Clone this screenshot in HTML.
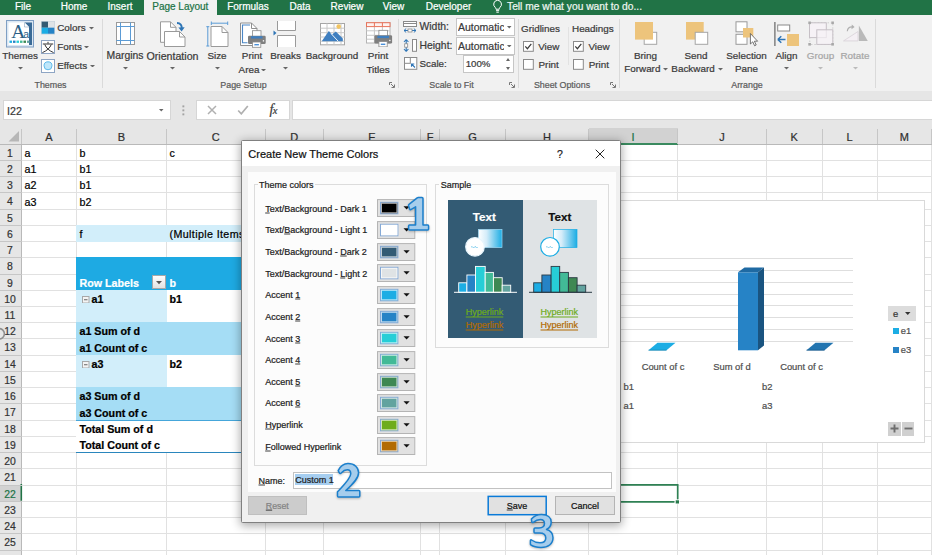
<!DOCTYPE html>
<html><head><meta charset="utf-8"><title>Excel</title>
<style>
html,body{margin:0;padding:0}
body{width:932px;height:555px;overflow:hidden;position:relative;background:#fff;font-family:"Liberation Sans",sans-serif}
.a{position:absolute;box-sizing:border-box}
.t{position:absolute;white-space:nowrap;line-height:1;-webkit-text-stroke:0.22px}
.t.c{transform:translate(-50%,-50%)}
.t.l{transform:translate(0,-50%)}
u{text-decoration:underline;text-underline-offset:0.6px;text-decoration-thickness:0.8px;text-decoration-color:rgba(30,30,30,0.85)}
u.h{text-underline-offset:1.8px;text-decoration-thickness:0.9px;text-decoration-color:currentColor}
</style></head><body>
<div class="a" style="left:0px;top:0px;width:932px;height:15.7px;background:#217346;"></div>
<div class="a" style="left:143.75px;top:0px;width:73.5px;height:17px;background:#f1f1f1;"></div>
<span class="t c" style="left:23px;top:6.5px;font-size:10px;color:#fff;">File</span>
<span class="t c" style="left:74px;top:6.5px;font-size:10px;color:#fff;">Home</span>
<span class="t c" style="left:120px;top:6.5px;font-size:10px;color:#fff;">Insert</span>
<span class="t c" style="left:248px;top:6.5px;font-size:10px;color:#fff;">Formulas</span>
<span class="t c" style="left:300px;top:6.5px;font-size:10px;color:#fff;">Data</span>
<span class="t c" style="left:347px;top:6.5px;font-size:10px;color:#fff;">Review</span>
<span class="t c" style="left:393.5px;top:6.5px;font-size:10px;color:#fff;">View</span>
<span class="t c" style="left:448.5px;top:6.5px;font-size:10px;color:#fff;">Developer</span>
<span class="t c" style="left:180.3px;top:6.5px;font-size:10px;color:#217346;">Page Layout</span>
<span class="t l" style="left:507px;top:6.5px;font-size:10.25px;color:#eef6f1;">Tell me what you want to do...</span>
<svg class="a" style="left:491.2px;top:-0.8px;" width="13.2" height="15.4" viewBox="0 0 12 14"><path d="M6 1.2a3.6 3.6 0 0 0-2.2 6.4c.5.5.7 1 .7 1.7h3c0-.7.2-1.200.7-1.7A3.600 3.600 0 0 0 6 1.200z" fill="none" stroke="#fff" stroke-width="0.9"/><path d="M4.600 10.600h2.800M4.900 12h2.200" stroke="#fff" stroke-width="0.9"/></svg>
<div class="a" style="left:0px;top:15px;width:932px;height:77px;background:#f1f1f1;"></div>
<div class="a" style="left:0px;top:91px;width:932px;height:38px;background:#e6e6e6;"></div>
<div class="a" style="left:102px;top:19px;width:1px;height:69px;background:#dadada;"></div>
<div class="a" style="left:398px;top:19px;width:1px;height:69px;background:#dadada;"></div>
<div class="a" style="left:518px;top:19px;width:1px;height:69px;background:#dadada;"></div>
<div class="a" style="left:618.7px;top:19px;width:1px;height:69px;background:#dadada;"></div>
<div class="a" style="left:875px;top:19px;width:1px;height:69px;background:#dadada;"></div>
<div class="a" style="left:568.3px;top:27px;width:1px;height:38px;background:#e2e2e2;"></div>
<span class="t c" style="left:50.5px;top:85.3px;font-size:8.9px;color:#5c5c5c;">Themes</span>
<span class="t c" style="left:243.5px;top:85.3px;font-size:8.9px;color:#5c5c5c;">Page Setup</span>
<span class="t c" style="left:451.5px;top:85.3px;font-size:8.9px;color:#5c5c5c;">Scale to Fit</span>
<span class="t c" style="left:562px;top:85.3px;font-size:8.9px;color:#5c5c5c;">Sheet Options</span>
<span class="t c" style="left:747px;top:85.3px;font-size:8.9px;color:#5c5c5c;">Arrange</span>
<svg class="a" style="left:388.8px;top:82.3px;" width="6" height="6" viewBox="0 0 6 6"><path d="M0.500 3V0.500H3" fill="none" stroke="#777" stroke-width="1"/><path d="M2 2L5 5M5.500 2.500V5.500H2.500" fill="none" stroke="#777" stroke-width="1"/></svg>
<svg class="a" style="left:508.5px;top:82.3px;" width="6" height="6" viewBox="0 0 6 6"><path d="M0.500 3V0.500H3" fill="none" stroke="#777" stroke-width="1"/><path d="M2 2L5 5M5.500 2.500V5.500H2.500" fill="none" stroke="#777" stroke-width="1"/></svg>
<svg class="a" style="left:610px;top:82.3px;" width="6" height="6" viewBox="0 0 6 6"><path d="M0.500 3V0.500H3" fill="none" stroke="#777" stroke-width="1"/><path d="M2 2L5 5M5.500 2.500V5.500H2.500" fill="none" stroke="#777" stroke-width="1"/></svg>
<svg class="a" style="left:6px;top:20px;" width="28" height="27.5" viewBox="0 0 28 27.5">
<rect x="0.5" y="0.500" width="27" height="26.500" fill="#dbe7f3" stroke="#7f9fc4"/>
<path d="M2.5 2.500H18.500L23 7V25H2.500Z" fill="#fff"/>
<path d="M18.500 2.500H26V25H23V7Z" fill="#3a6a96"/>
<path d="M18.500 2.500V7H23" fill="#fff" stroke="#8aa4c0" stroke-width="0.600"/>
<text x="5.200" y="18.400" font-family="Liberation Serif" font-size="19.500" fill="#2b5f86">A</text>
<text x="17.300" y="18.400" font-family="Liberation Sans" font-size="10.500" fill="#2b5f86">a</text>
<rect x="3.500" y="20.600" width="2.500" height="2.300" fill="#1cade4"/><rect x="7" y="20.600" width="2.500" height="2.300" fill="#2683c6"/><rect x="10.500" y="20.600" width="2.500" height="2.300" fill="#27ced7"/><rect x="14" y="20.600" width="2.500" height="2.300" fill="#42ba97"/><rect x="17.500" y="20.600" width="2.500" height="2.300" fill="#3e8853"/><rect x="21" y="20.600" width="2.500" height="2.300" fill="#62a39f"/>
</svg>
<span class="t c" style="left:20px;top:56px;font-size:9.9px;color:#3a3a3a;">Themes</span>
<svg class="a" style="left:17.5px;top:67.05px;" width="5" height="2.5" viewBox="0 0 5 2.5"><path d="M0 0H5L2.5 2.5Z" fill="#666"/></svg>
<svg class="a" style="left:41px;top:21px;" width="14" height="13.5" viewBox="0 0 14 13.5"><rect x="0" y="0" width="14" height="13.500" fill="#c9d3dc"/><rect x="0.700" y="0.700" width="6.300" height="6" fill="#335a72"/><rect x="7" y="0.700" width="6.300" height="6" fill="#dfe3e6"/><rect x="0.700" y="6.700" width="6.300" height="6" fill="#1cade4"/><rect x="7" y="6.700" width="6.300" height="6" fill="#2683c6"/></svg>
<span class="t l" style="left:57.2px;top:28px;font-size:9.9px;color:#3a3a3a;">Colors</span>
<svg class="a" style="left:88.5px;top:27.05px;" width="5" height="2.5" viewBox="0 0 5 2.5"><path d="M0 0H5L2.5 2.5Z" fill="#666"/></svg>
<svg class="a" style="left:41px;top:39.5px;" width="14" height="14" viewBox="0 0 14 14"><rect x="0.5" y="0.500" width="13" height="13" fill="#fff" stroke="#8ea5c4"/><path d="M7 1.800V3.600M1.800 4H12.200M3.800 4.500C5 8 8.500 11 12.600 12.600M10.300 4.500C9 8 5.500 11 1.400 12.600" fill="none" stroke="#333" stroke-width="1"/></svg>
<span class="t l" style="left:57.2px;top:46.8px;font-size:9.9px;color:#3a3a3a;">Fonts</span>
<svg class="a" style="left:83.5px;top:45.75px;" width="5" height="2.5" viewBox="0 0 5 2.5"><path d="M0 0H5L2.5 2.5Z" fill="#666"/></svg>
<svg class="a" style="left:41px;top:58.5px;" width="14" height="14" viewBox="0 0 14 14"><rect x="0.5" y="0.500" width="13" height="13" fill="#fff" stroke="#8ea5c4"/><circle cx="7" cy="6.800" r="4" fill="#bfe6fa" stroke="#4fb3e8" stroke-width="0.9"/></svg>
<span class="t l" style="left:57.2px;top:65.8px;font-size:9.9px;color:#3a3a3a;">Effects</span>
<svg class="a" style="left:90.0px;top:64.75px;" width="5" height="2.5" viewBox="0 0 5 2.5"><path d="M0 0H5L2.5 2.5Z" fill="#666"/></svg>
<svg class="a" style="left:116px;top:22px;" width="19" height="23" viewBox="0 0 19 23"><rect x="0.5" y="0.500" width="18" height="22" fill="#fff" stroke="#9a9a9a"/><path d="M4.500 0.500V22.500M14.500 0.500V22.500M0.500 4.500H18.500M0.500 18.500H18.500" stroke="#5b9bd5" stroke-width="1" fill="none"/></svg>
<span class="t c" style="left:125px;top:56px;font-size:10.4px;color:#3a3a3a;">Margins</span>
<svg class="a" style="left:122.5px;top:67.05px;" width="5" height="2.5" viewBox="0 0 5 2.5"><path d="M0 0H5L2.5 2.5Z" fill="#666"/></svg>
<svg class="a" style="left:160px;top:20.5px;" width="26" height="26" viewBox="0 0 26 26">
<path d="M0.500 0.800H10.500L16 6.300V21.300H0.500Z" fill="#fff" stroke="#9a9a9a"/><path d="M10.500 0.800V6.300H16" fill="none" stroke="#9a9a9a"/>
<path d="M4.500 10.500H19.500L25 16V25.500H4.500Z" fill="#fff" stroke="#9a9a9a"/><path d="M19.500 10.500V16H25" fill="none" stroke="#9a9a9a"/>
<path d="M17 2C20.500 2 22 4.500 21.700 7.500" fill="none" stroke="#2e75b6" stroke-width="1.900"/><path d="M18.400 6.600L21.600 10.500L24.700 6.300Z" fill="#2e75b6"/>
</svg>
<span class="t c" style="left:172.5px;top:56px;font-size:10.65px;color:#3a3a3a;">Orientation</span>
<svg class="a" style="left:170.0px;top:67.05px;" width="5" height="2.5" viewBox="0 0 5 2.5"><path d="M0 0H5L2.5 2.5Z" fill="#666"/></svg>
<svg class="a" style="left:206px;top:20.5px;" width="23" height="26" viewBox="0 0 23 26">
<path d="M5.300 0.500V4M5.300 2.200H21.700M21.700 0.500V4" stroke="#5b9bd5" fill="none" stroke-width="1"/>
<path d="M1.800 5.500V25.100M0.300 5.700H3.300M0.300 25H3.300" stroke="#5b9bd5" fill="none" stroke-width="1"/>
<path d="M5 5.500H16L22 11.500V25.500H5Z" fill="#fff" stroke="#9a9a9a"/><path d="M16 5.500V11.500H22" fill="none" stroke="#9a9a9a"/>
</svg>
<span class="t c" style="left:217px;top:56px;font-size:9.9px;color:#3a3a3a;">Size</span>
<svg class="a" style="left:214.5px;top:67.05px;" width="5" height="2.5" viewBox="0 0 5 2.5"><path d="M0 0H5L2.5 2.5Z" fill="#666"/></svg>
<svg class="a" style="left:240px;top:20.5px;" width="27" height="27" viewBox="0 0 27 27">
<path d="M0.500 2H11.500L17 7.500V24.500H0.500Z" fill="#fff" stroke="#8f8f8f"/><path d="M11.500 2V7.500H17" fill="none" stroke="#8f8f8f"/>
<path d="M10 4H2.500V21.800H7.500" fill="none" stroke="#4a86c5" stroke-width="1.100"/>
<rect x="12.5" y="9.7" width="8.500" height="6" fill="#fff" stroke="#8a8a8a" stroke-width="0.800"/><rect x="8.0" y="14.7" width="17.700" height="8.200" rx="1.200" fill="#7f7f7f"/><rect x="11.0" y="15.2" width="11.500" height="2.300" fill="#3f7fc0"/><rect x="22.8" y="19.2" width="1.300" height="1.300" fill="#fff"/><rect x="12.5" y="21.0" width="8.300" height="5.300" fill="#fff" stroke="#8a8a8a" stroke-width="0.800"/><path d="M14.4 23.7h4.500" stroke="#4a90d9" stroke-width="1.400"/></svg>
<span class="t c" style="left:252px;top:56px;font-size:9.9px;color:#3a3a3a;">Print</span>
<span class="t c" style="left:249px;top:69.8px;font-size:9.9px;color:#3a3a3a;">Area</span>
<svg class="a" style="left:260.8px;top:68.55px;" width="5" height="2.5" viewBox="0 0 5 2.5"><path d="M0 0H5L2.5 2.5Z" fill="#666"/></svg>
<svg class="a" style="left:272px;top:20.5px;" width="25" height="26" viewBox="0 0 25 26">
<path d="M5.500 0V9.500H23.500V0" fill="#fff" stroke="#9a9a9a"/>
<path d="M5.500 26V14.500H23.500V26" fill="#fff" stroke="#9a9a9a"/>
<path d="M1.500 9.500L4.500 12L1.500 14.500Z" fill="#2e75b6"/>
</svg>
<span class="t c" style="left:285.5px;top:56px;font-size:9.9px;color:#3a3a3a;">Breaks</span>
<svg class="a" style="left:283.0px;top:67.05px;" width="5" height="2.5" viewBox="0 0 5 2.5"><path d="M0 0H5L2.5 2.5Z" fill="#666"/></svg>
<svg class="a" style="left:319.5px;top:22.5px;" width="25" height="23" viewBox="0 0 25 23">
<rect x="0.5" y="0.500" width="24" height="21.300" fill="#fff" stroke="#a6a6a6"/>
<path d="M7 0.500V21.500M14 0.500V21.500M21 0.500V21.500M0.500 5.200H24.500M0.500 9.700H24.500M0.500 14H24.500M0.500 18.200H24.500" stroke="#c8c8c8" stroke-width="1" fill="none"/>
<circle cx="18.700" cy="3.600" r="2.300" fill="#f2c562"/>
<path d="M1.800 18.200L8.800 8L18.300 18.200Z" fill="#3f7fc0"/><path d="M11.800 11.800L15.800 8.600L22.800 15.500V18.200H17.800Z" fill="#3f7fc0"/>
<path d="M11 10.500L18.300 18.400" stroke="#fff" stroke-width="0.900"/>
</svg>
<span class="t c" style="left:332px;top:56px;font-size:9.9px;color:#3a3a3a;">Background</span>
<svg class="a" style="left:366px;top:22px;" width="27" height="25" viewBox="0 0 27 25">
<rect x="0.5" y="0.700" width="23.500" height="20.300" fill="#fff" stroke="#b4b4b4"/>
<path d="M8.400 4.600V21M16.400 4.600V21M0.500 8.800H24M0.500 13.300H24M0.500 17.200H24" stroke="#c8c8c8" stroke-width="1" fill="none"/>
<rect x="0.500" y="0.700" width="23.500" height="3.900" fill="#fdf1ee" stroke="#e8735a" stroke-width="1"/><path d="M8.400 0.700V4.600M16.400 0.700V4.600" stroke="#e8735a" stroke-width="1"/>
<rect x="12.9" y="8.3" width="8.500" height="6" fill="#fff" stroke="#8a8a8a" stroke-width="0.800"/><rect x="8.4" y="13.3" width="17.700" height="8.200" rx="1.200" fill="#7f7f7f"/><rect x="11.4" y="13.8" width="11.500" height="2.300" fill="#3f7fc0"/><rect x="23.2" y="17.8" width="1.300" height="1.300" fill="#fff"/><rect x="12.9" y="19.6" width="8.300" height="5.300" fill="#fff" stroke="#8a8a8a" stroke-width="0.800"/><path d="M14.8 22.3h4.500" stroke="#4a90d9" stroke-width="1.400"/></svg>
<span class="t c" style="left:378px;top:56px;font-size:9.9px;color:#3a3a3a;">Print</span>
<span class="t c" style="left:378px;top:69.8px;font-size:9.9px;color:#3a3a3a;">Titles</span>
<svg class="a" style="left:403px;top:21px;" width="14" height="12" viewBox="0 0 14 12"><rect x="0.5" y="0.500" width="13" height="5" fill="#fff" stroke="#8a8a8a"/><path d="M0.500 2.500H13.500" stroke="#8a8a8a"/><path d="M1 9.500H13M1 9.500L3.200 7.500M1 9.500L3.200 11.500M13 9.500L10.800 7.500M13 9.500L10.800 11.500" stroke="#2e75b6" stroke-width="1" fill="none"/><rect x="5" y="8" width="4" height="3" fill="#fff" stroke="#8a8a8a" stroke-width="0.800"/></svg>
<span class="t l" style="left:419.5px;top:27.3px;font-size:10.4px;color:#3a3a3a;">Width:</span>
<div class="a" style="left:456px;top:18px;width:58.5px;height:18px;background:#fff;border:1px solid #c6c6c6;"></div>
<span class="t l" style="left:458px;top:27.300px;font-size:10.500px;color:#3a3a3a;width:45.600px;overflow:hidden;">Automatic</span>
<svg class="a" style="left:507.25px;top:26.25px;" width="4.5" height="2.5" viewBox="0 0 4.5 2.5"><path d="M0 0H4.5L2.25 2.5Z" fill="#666"/></svg>
<svg class="a" style="left:403px;top:38.5px;" width="14" height="13" viewBox="0 0 14 13"><path d="M3.200 0.500V12.500M3.200 0.500L1 3M3.200 0.500L5.400 3M3.200 12.500L1 10M3.200 12.500L5.400 10" stroke="#2e75b6" stroke-width="1.100" fill="none"/><rect x="1.700" y="4.800" width="3" height="3.400" fill="#fff" stroke="#8a8a8a" stroke-width="0.800"/><rect x="9.500" y="0.500" width="4" height="11.800" fill="#fff" stroke="#8a8a8a"/></svg>
<span class="t l" style="left:419.5px;top:45.8px;font-size:10.4px;color:#3a3a3a;">Height:</span>
<div class="a" style="left:456px;top:36.5px;width:58.5px;height:18px;background:#fff;border:1px solid #c6c6c6;"></div>
<span class="t l" style="left:458px;top:45.800px;font-size:10.500px;color:#3a3a3a;width:45.600px;overflow:hidden;">Automatic</span>
<svg class="a" style="left:507.25px;top:44.75px;" width="4.5" height="2.5" viewBox="0 0 4.5 2.5"><path d="M0 0H4.5L2.25 2.5Z" fill="#666"/></svg>
<svg class="a" style="left:403.7px;top:56.7px;" width="14" height="13" viewBox="0 0 14 13"><rect x="0.5" y="0.500" width="12.300" height="11.800" fill="#fff" stroke="#8a8a8a"/><rect x="0.500" y="0.500" width="5.800" height="5.800" fill="#fff" stroke="#8a8a8a"/><path d="M11 10.500L7.500 7M7.500 9.800V7H10.300" stroke="#2e75b6" stroke-width="1.100" fill="none"/></svg>
<span class="t l" style="left:419.5px;top:64.3px;font-size:9.8px;color:#3a3a3a;">Scale:</span>
<div class="a" style="left:463.3px;top:55px;width:51.2px;height:17.7px;background:#fff;border:1px solid #c6c6c6;"></div>
<span class="t l" style="left:465.7px;top:64.3px;font-size:9.7px;color:#3a3a3a;">100%</span>
<svg class="a" style="left:506px;top:58px;" width="4" height="3" viewBox="0 0 4 3"><path d="M0 3L2 0L4 3Z" fill="#666"/></svg>
<svg class="a" style="left:506px;top:66.5px;" width="4" height="3" viewBox="0 0 4 3"><path d="M0 0L2 3L4 0Z" fill="#666"/></svg>
<span class="t l" style="left:521px;top:29px;font-size:9.9px;color:#3a3a3a;">Gridlines</span>
<span class="t l" style="left:572px;top:29px;font-size:9.9px;color:#3a3a3a;">Headings</span>
<svg class="a" style="left:523.2px;top:41.3px;" width="10.8" height="10.8" viewBox="0 0 10.8 10.8"><rect x="0.5" y="0.500" width="9.800" height="9.800" fill="#fff" stroke="#8a8a8a"/><path d="M2.300 5.300L4.400 7.700L8.300 2.800" fill="none" stroke="#3a3a3a" stroke-width="1.200"/></svg>
<svg class="a" style="left:523.2px;top:59.4px;" width="10.8" height="10.8" viewBox="0 0 10.8 10.8"><rect x="0.5" y="0.500" width="9.800" height="9.800" fill="#fff" stroke="#8a8a8a"/></svg>
<svg class="a" style="left:573.2px;top:41.3px;" width="10.8" height="10.8" viewBox="0 0 10.8 10.8"><rect x="0.5" y="0.500" width="9.800" height="9.800" fill="#fff" stroke="#8a8a8a"/><path d="M2.300 5.300L4.400 7.700L8.300 2.800" fill="none" stroke="#3a3a3a" stroke-width="1.200"/></svg>
<svg class="a" style="left:573.2px;top:59.4px;" width="10.8" height="10.8" viewBox="0 0 10.8 10.8"><rect x="0.5" y="0.500" width="9.800" height="9.800" fill="#fff" stroke="#8a8a8a"/></svg>
<span class="t l" style="left:538.2px;top:47.2px;font-size:9.9px;color:#3a3a3a;">View</span>
<span class="t l" style="left:538.5px;top:65.4px;font-size:9.9px;color:#3a3a3a;">Print</span>
<span class="t l" style="left:588.4px;top:47.2px;font-size:9.9px;color:#3a3a3a;">View</span>
<span class="t l" style="left:588.7px;top:65.4px;font-size:9.9px;color:#3a3a3a;">Print</span>
<svg class="a" style="left:634.7px;top:22.2px;" width="24" height="23" viewBox="0 0 24 23"><rect x="9.200" y="10.300" width="12.500" height="12" fill="#fff" stroke="#a6a6a6"/><rect x="0" y="0" width="18" height="17.600" fill="#edc47c"/></svg>
<span class="t c" style="left:645.5px;top:56px;font-size:9.9px;color:#3a3a3a;">Bring</span>
<span class="t c" style="left:642.3px;top:69.3px;font-size:9.9px;color:#3a3a3a;">Forward</span>
<svg class="a" style="left:663.0px;top:68.35px;" width="5" height="2.5" viewBox="0 0 5 2.5"><path d="M0 0H5L2.5 2.5Z" fill="#666"/></svg>
<svg class="a" style="left:685.5px;top:22.2px;" width="24" height="23" viewBox="0 0 24 23"><rect x="0" y="0" width="17.700" height="17.600" fill="#edc47c"/><rect x="9.200" y="10.300" width="12.500" height="12" fill="#fff" stroke="#a6a6a6"/></svg>
<span class="t c" style="left:696px;top:56px;font-size:9.9px;color:#3a3a3a;">Send</span>
<span class="t c" style="left:693px;top:69.3px;font-size:9.9px;color:#3a3a3a;">Backward</span>
<svg class="a" style="left:717.5px;top:68.35px;" width="5" height="2.5" viewBox="0 0 5 2.5"><path d="M0 0H5L2.5 2.5Z" fill="#666"/></svg>
<svg class="a" style="left:735px;top:21px;" width="24" height="26" viewBox="0 0 24 26"><rect x="1" y="0.800" width="11" height="10" fill="#fff" stroke="#9a9a9a"/><rect x="1" y="13.300" width="11" height="10" fill="#fff" stroke="#9a9a9a"/><rect x="8" y="7" width="10.300" height="9.500" fill="#edc47c"/>
<path d="M15.400 12.500V23L17.800 20.800L19.600 24.800L21.200 24L19.400 20.200H22.600Z" fill="#fff" stroke="#555" stroke-width="0.800"/></svg>
<span class="t c" style="left:746.5px;top:56px;font-size:9.9px;color:#3a3a3a;">Selection</span>
<span class="t c" style="left:746.5px;top:69.3px;font-size:9.9px;color:#3a3a3a;">Pane</span>
<svg class="a" style="left:773px;top:21.5px;" width="27" height="25" viewBox="0 0 27 25"><path d="M1.900 0V24" stroke="#666" stroke-width="1.200"/><rect x="4.700" y="3" width="12" height="6" fill="#fff" stroke="#8a8a8a"/><rect x="14" y="12" width="12" height="12" fill="#edc47c"/>
<path d="M4.800 17.500H12.500M4.800 17.500L8.300 14.200M4.800 17.500L8.300 20.800" stroke="#2e75b6" stroke-width="1.500" fill="none"/></svg>
<span class="t c" style="left:786.5px;top:56px;font-size:9.9px;color:#3a3a3a;">Align</span>
<svg class="a" style="left:784.0px;top:67.05px;" width="5" height="2.5" viewBox="0 0 5 2.5"><path d="M0 0H5L2.5 2.5Z" fill="#666"/></svg>
<svg class="a" style="left:808px;top:21px;" width="26" height="25" viewBox="0 0 26 25"><path d="M3 1.800H23M3 23.500H23M1.800 3V22M24.800 3V22" fill="none" stroke="#cfcfcf" stroke-dasharray="1.500 1.800"/>
<rect x="1.500" y="1.800" width="16.800" height="14.800" fill="#f6f2f6" stroke="#c6c0c6"/><rect x="8.800" y="8.800" width="16" height="14.600" fill="#f6f2f6" fill-opacity="0.700" stroke="#c6c0c6"/>
<rect x="0.300" y="0.500" width="2.600" height="2.600" fill="#a8a8a8"/><rect x="23.300" y="0.500" width="2.600" height="2.600" fill="#a8a8a8"/><rect x="0.300" y="22" width="2.600" height="2.600" fill="#a8a8a8"/><rect x="23.300" y="22" width="2.600" height="2.600" fill="#a8a8a8"/></svg>
<span class="t c" style="left:820.5px;top:56px;font-size:9.9px;color:#a6a6a6;">Group</span>
<svg class="a" style="left:818.0px;top:67.05px;" width="5" height="2.5" viewBox="0 0 5 2.5"><path d="M0 0H5L2.5 2.5Z" fill="#bbb"/></svg>
<svg class="a" style="left:843px;top:22px;" width="26" height="22" viewBox="0 0 26 22"><path d="M0.500 18.900H15V9.500Z" fill="#f4f0f4" stroke="#d8d2d8" stroke-width="0.800"/><path d="M15.900 18.900V3.400L24.800 18.900Z" fill="#b9b9b9"/>
<path d="M4.300 9.300C4.500 6.500 6.500 4.800 9.500 4.900" fill="none" stroke="#b0b0b0" stroke-width="1.200"/><path d="M8.800 2.500L11.600 5L8.500 7.200Z" fill="#b0b0b0"/></svg>
<span class="t c" style="left:855px;top:56px;font-size:9.9px;color:#a6a6a6;">Rotate</span>
<svg class="a" style="left:852.5px;top:67.05px;" width="5" height="2.5" viewBox="0 0 5 2.5"><path d="M0 0H5L2.5 2.5Z" fill="#bbb"/></svg>
<div class="a" style="left:3px;top:100px;width:167.5px;height:20px;background:#fff;border:1px solid #d6d6d6;"></div>
<span class="t l" style="left:7px;top:110.5px;font-size:10.7px;color:#3a3a3a;">I22</span>
<svg class="a" style="left:159.25px;top:109.25px;" width="4.5" height="2.5" viewBox="0 0 4.5 2.5"><path d="M0 0H4.5L2.25 2.5Z" fill="#666"/></svg>
<svg class="a" style="left:182.3px;top:105.1px;" width="3" height="3" viewBox="0 0 3 3"><rect x="0.400" y="0.400" width="1.900" height="1.900" fill="#a3a3a3"/></svg>
<svg class="a" style="left:182.3px;top:109.1px;" width="3" height="3" viewBox="0 0 3 3"><rect x="0.400" y="0.400" width="1.900" height="1.900" fill="#a3a3a3"/></svg>
<svg class="a" style="left:182.3px;top:113.1px;" width="3" height="3" viewBox="0 0 3 3"><rect x="0.400" y="0.400" width="1.900" height="1.900" fill="#a3a3a3"/></svg>
<div class="a" style="left:196px;top:100px;width:94px;height:20px;background:#fff;border:1px solid #d6d6d6;"></div>
<svg class="a" style="left:206.5px;top:105.3px;" width="10" height="10" viewBox="0 0 10 10"><path d="M1 1L9 9M9 1L1 9" stroke="#b0b0b0" stroke-width="1.500" fill="none"/></svg>
<svg class="a" style="left:237px;top:105.3px;" width="12" height="10" viewBox="0 0 12 10"><path d="M1.200 5.500L4.300 8.800L10.800 1" stroke="#b0b0b0" stroke-width="1.700" fill="none"/></svg>
<span class="t c" style="left:273.500px;top:110.300px;font-size:14px;color:#3c3c3c;font-family:'Liberation Serif',serif;font-style:italic;">f<span style="font-size:10.500px;margin-left:-0.500px">x</span></span>
<div class="a" style="left:292px;top:100px;width:645px;height:20px;background:#fff;border:1px solid #d6d6d6;"></div>
<div class="a" style="left:0px;top:128px;width:932px;height:16.5px;background:#e6e6e6;"></div>
<div class="a" style="left:588.5px;top:128px;width:89px;height:16.5px;background:#d2d2d2;"></div>
<div class="a" style="left:588.5px;top:142.9px;width:89.5px;height:2.1px;background:#3a8a5f;"></div>
<div class="a" style="left:0px;top:143.6px;width:588.5px;height:1px;background:#b9b9b9;"></div>
<div class="a" style="left:678px;top:143.6px;width:260px;height:1px;background:#b9b9b9;"></div>
<svg class="a" style="left:8px;top:131px;" width="12" height="11" viewBox="0 0 12 11"><path d="M11 0V10.500H0.500Z" fill="#b7b7b7"/></svg>
<div class="a" style="left:21.0px;top:129px;width:1px;height:15px;background:#c6c6c6;"></div>
<span class="t c" style="left:49.0px;top:136.8px;font-size:11px;color:#303030;">A</span>
<div class="a" style="left:76.0px;top:129px;width:1px;height:15px;background:#c6c6c6;"></div>
<span class="t c" style="left:121.5px;top:136.8px;font-size:11px;color:#303030;">B</span>
<div class="a" style="left:166.0px;top:129px;width:1px;height:15px;background:#c6c6c6;"></div>
<span class="t c" style="left:215.75px;top:136.8px;font-size:11px;color:#303030;">C</span>
<div class="a" style="left:264.5px;top:129px;width:1px;height:15px;background:#c6c6c6;"></div>
<span class="t c" style="left:294.25px;top:136.8px;font-size:11px;color:#303030;">D</span>
<div class="a" style="left:323.0px;top:129px;width:1px;height:15px;background:#c6c6c6;"></div>
<span class="t c" style="left:372.0px;top:136.8px;font-size:11px;color:#303030;">E</span>
<div class="a" style="left:420.0px;top:129px;width:1px;height:15px;background:#c6c6c6;"></div>
<span class="t c" style="left:430.0px;top:136.8px;font-size:11px;color:#303030;">F</span>
<div class="a" style="left:439.0px;top:129px;width:1px;height:15px;background:#c6c6c6;"></div>
<span class="t c" style="left:472.5px;top:136.8px;font-size:11px;color:#303030;">G</span>
<div class="a" style="left:505.0px;top:129px;width:1px;height:15px;background:#c6c6c6;"></div>
<span class="t c" style="left:547.0px;top:136.8px;font-size:11px;color:#303030;">H</span>
<div class="a" style="left:588.0px;top:129px;width:1px;height:15px;background:#c6c6c6;"></div>
<span class="t c" style="left:633.0px;top:136.8px;font-size:11px;color:#217346;">I</span>
<div class="a" style="left:677.0px;top:129px;width:1px;height:15px;background:#c6c6c6;"></div>
<span class="t c" style="left:722.0px;top:136.8px;font-size:11px;color:#303030;">J</span>
<div class="a" style="left:766.0px;top:129px;width:1px;height:15px;background:#c6c6c6;"></div>
<span class="t c" style="left:794.25px;top:136.8px;font-size:11px;color:#303030;">K</span>
<div class="a" style="left:821.5px;top:129px;width:1px;height:15px;background:#c6c6c6;"></div>
<span class="t c" style="left:849.5px;top:136.8px;font-size:11px;color:#303030;">L</span>
<div class="a" style="left:876.5px;top:129px;width:1px;height:15px;background:#c6c6c6;"></div>
<span class="t c" style="left:904.25px;top:136.8px;font-size:11px;color:#303030;">M</span>
<div class="a" style="left:931px;top:129px;width:1px;height:15px;background:#c6c6c6;"></div>
<div class="a" style="left:931px;top:145px;width:1px;height:410px;background:#e1e1e1;"></div>
<div class="a" style="left:21.0px;top:145px;width:1px;height:410px;background:#e1e1e1;"></div>
<div class="a" style="left:76.0px;top:145px;width:1px;height:410px;background:#e1e1e1;"></div>
<div class="a" style="left:166.0px;top:145px;width:1px;height:410px;background:#e1e1e1;"></div>
<div class="a" style="left:264.5px;top:145px;width:1px;height:410px;background:#e1e1e1;"></div>
<div class="a" style="left:323.0px;top:145px;width:1px;height:410px;background:#e1e1e1;"></div>
<div class="a" style="left:420.0px;top:145px;width:1px;height:410px;background:#e1e1e1;"></div>
<div class="a" style="left:439.0px;top:145px;width:1px;height:410px;background:#e1e1e1;"></div>
<div class="a" style="left:505.0px;top:145px;width:1px;height:410px;background:#e1e1e1;"></div>
<div class="a" style="left:588.0px;top:145px;width:1px;height:410px;background:#e1e1e1;"></div>
<div class="a" style="left:677.0px;top:145px;width:1px;height:410px;background:#e1e1e1;"></div>
<div class="a" style="left:766.0px;top:145px;width:1px;height:410px;background:#e1e1e1;"></div>
<div class="a" style="left:821.5px;top:145px;width:1px;height:410px;background:#e1e1e1;"></div>
<div class="a" style="left:876.5px;top:145px;width:1px;height:410px;background:#e1e1e1;"></div>
<div class="a" style="left:0px;top:145px;width:21.5px;height:410px;background:#e6e6e6;"></div>
<div class="a" style="left:21px;top:145px;width:1px;height:410px;background:#b9b9b9;"></div>
<div class="a" style="left:0px;top:485.14px;width:21.5px;height:16.24px;background:#d2d2d2;"></div>
<svg class="a" style="left:19px;top:483.74px;" width="4" height="17.24" viewBox="0 0 4 17.24"><rect x="1.500" y="0" width="1.600" height="16.74" fill="#217346"/></svg>
<div class="a" style="left:21.5px;top:159.84px;width:911px;height:1px;background:#e1e1e1;"></div>
<div class="a" style="left:0px;top:159.84px;width:21.5px;height:1px;background:#c6c6c6;"></div>
<span class="t c" style="left:10px;top:153.6px;font-size:11.3px;color:#333;transform:translate(-50%,-50%) scaleX(0.920);">1</span>
<div class="a" style="left:21.5px;top:176.08px;width:911px;height:1px;background:#e1e1e1;"></div>
<div class="a" style="left:0px;top:176.08px;width:21.5px;height:1px;background:#c6c6c6;"></div>
<span class="t c" style="left:10px;top:169.84px;font-size:11.3px;color:#333;transform:translate(-50%,-50%) scaleX(0.920);">2</span>
<div class="a" style="left:21.5px;top:192.32px;width:911px;height:1px;background:#e1e1e1;"></div>
<div class="a" style="left:0px;top:192.32px;width:21.5px;height:1px;background:#c6c6c6;"></div>
<span class="t c" style="left:10px;top:186.07999999999998px;font-size:11.3px;color:#333;transform:translate(-50%,-50%) scaleX(0.920);">3</span>
<div class="a" style="left:21.5px;top:208.56px;width:911px;height:1px;background:#e1e1e1;"></div>
<div class="a" style="left:0px;top:208.56px;width:21.5px;height:1px;background:#c6c6c6;"></div>
<span class="t c" style="left:10px;top:202.32px;font-size:11.3px;color:#333;transform:translate(-50%,-50%) scaleX(0.920);">4</span>
<div class="a" style="left:21.5px;top:224.8px;width:911px;height:1px;background:#e1e1e1;"></div>
<div class="a" style="left:0px;top:224.8px;width:21.5px;height:1px;background:#c6c6c6;"></div>
<span class="t c" style="left:10px;top:218.56px;font-size:11.3px;color:#333;transform:translate(-50%,-50%) scaleX(0.920);">5</span>
<div class="a" style="left:21.5px;top:241.04px;width:911px;height:1px;background:#e1e1e1;"></div>
<div class="a" style="left:0px;top:241.04px;width:21.5px;height:1px;background:#c6c6c6;"></div>
<span class="t c" style="left:10px;top:234.79999999999998px;font-size:11.3px;color:#333;transform:translate(-50%,-50%) scaleX(0.920);">6</span>
<div class="a" style="left:21.5px;top:257.28px;width:911px;height:1px;background:#e1e1e1;"></div>
<div class="a" style="left:0px;top:257.28px;width:21.5px;height:1px;background:#c6c6c6;"></div>
<span class="t c" style="left:10px;top:251.04px;font-size:11.3px;color:#333;transform:translate(-50%,-50%) scaleX(0.920);">7</span>
<div class="a" style="left:21.5px;top:273.52px;width:911px;height:1px;background:#e1e1e1;"></div>
<div class="a" style="left:0px;top:273.52px;width:21.5px;height:1px;background:#c6c6c6;"></div>
<span class="t c" style="left:10px;top:267.28px;font-size:11.3px;color:#333;transform:translate(-50%,-50%) scaleX(0.920);">8</span>
<div class="a" style="left:21.5px;top:289.76px;width:911px;height:1px;background:#e1e1e1;"></div>
<div class="a" style="left:0px;top:289.76px;width:21.5px;height:1px;background:#c6c6c6;"></div>
<span class="t c" style="left:10px;top:283.52px;font-size:11.3px;color:#333;transform:translate(-50%,-50%) scaleX(0.920);">9</span>
<div class="a" style="left:21.5px;top:306.0px;width:911px;height:1px;background:#e1e1e1;"></div>
<div class="a" style="left:0px;top:306.0px;width:21.5px;height:1px;background:#c6c6c6;"></div>
<span class="t c" style="left:10px;top:299.76px;font-size:11.3px;color:#333;transform:translate(-50%,-50%) scaleX(0.920);">10</span>
<div class="a" style="left:21.5px;top:322.24px;width:911px;height:1px;background:#e1e1e1;"></div>
<div class="a" style="left:0px;top:322.24px;width:21.5px;height:1px;background:#c6c6c6;"></div>
<span class="t c" style="left:10px;top:316.0px;font-size:11.3px;color:#333;transform:translate(-50%,-50%) scaleX(0.920);">11</span>
<div class="a" style="left:21.5px;top:338.48px;width:911px;height:1px;background:#e1e1e1;"></div>
<div class="a" style="left:0px;top:338.48px;width:21.5px;height:1px;background:#c6c6c6;"></div>
<span class="t c" style="left:10px;top:332.24px;font-size:11.3px;color:#333;transform:translate(-50%,-50%) scaleX(0.920);">12</span>
<div class="a" style="left:21.5px;top:354.72px;width:911px;height:1px;background:#e1e1e1;"></div>
<div class="a" style="left:0px;top:354.72px;width:21.5px;height:1px;background:#c6c6c6;"></div>
<span class="t c" style="left:10px;top:348.48px;font-size:11.3px;color:#333;transform:translate(-50%,-50%) scaleX(0.920);">13</span>
<div class="a" style="left:21.5px;top:370.96px;width:911px;height:1px;background:#e1e1e1;"></div>
<div class="a" style="left:0px;top:370.96px;width:21.5px;height:1px;background:#c6c6c6;"></div>
<span class="t c" style="left:10px;top:364.71999999999997px;font-size:11.3px;color:#333;transform:translate(-50%,-50%) scaleX(0.920);">14</span>
<div class="a" style="left:21.5px;top:387.2px;width:911px;height:1px;background:#e1e1e1;"></div>
<div class="a" style="left:0px;top:387.2px;width:21.5px;height:1px;background:#c6c6c6;"></div>
<span class="t c" style="left:10px;top:380.96px;font-size:11.3px;color:#333;transform:translate(-50%,-50%) scaleX(0.920);">15</span>
<div class="a" style="left:21.5px;top:403.43999999999994px;width:911px;height:1px;background:#e1e1e1;"></div>
<div class="a" style="left:0px;top:403.43999999999994px;width:21.5px;height:1px;background:#c6c6c6;"></div>
<span class="t c" style="left:10px;top:397.19999999999993px;font-size:11.3px;color:#333;transform:translate(-50%,-50%) scaleX(0.920);">16</span>
<div class="a" style="left:21.5px;top:419.67999999999995px;width:911px;height:1px;background:#e1e1e1;"></div>
<div class="a" style="left:0px;top:419.67999999999995px;width:21.5px;height:1px;background:#c6c6c6;"></div>
<span class="t c" style="left:10px;top:413.43999999999994px;font-size:11.3px;color:#333;transform:translate(-50%,-50%) scaleX(0.920);">17</span>
<div class="a" style="left:21.5px;top:435.91999999999996px;width:911px;height:1px;background:#e1e1e1;"></div>
<div class="a" style="left:0px;top:435.91999999999996px;width:21.5px;height:1px;background:#c6c6c6;"></div>
<span class="t c" style="left:10px;top:429.67999999999995px;font-size:11.3px;color:#333;transform:translate(-50%,-50%) scaleX(0.920);">18</span>
<div class="a" style="left:21.5px;top:452.15999999999997px;width:911px;height:1px;background:#e1e1e1;"></div>
<div class="a" style="left:0px;top:452.15999999999997px;width:21.5px;height:1px;background:#c6c6c6;"></div>
<span class="t c" style="left:10px;top:445.91999999999996px;font-size:11.3px;color:#333;transform:translate(-50%,-50%) scaleX(0.920);">19</span>
<div class="a" style="left:21.5px;top:468.4px;width:911px;height:1px;background:#e1e1e1;"></div>
<div class="a" style="left:0px;top:468.4px;width:21.5px;height:1px;background:#c6c6c6;"></div>
<span class="t c" style="left:10px;top:462.15999999999997px;font-size:11.3px;color:#333;transform:translate(-50%,-50%) scaleX(0.920);">20</span>
<div class="a" style="left:21.5px;top:484.64px;width:911px;height:1px;background:#e1e1e1;"></div>
<div class="a" style="left:0px;top:484.64px;width:21.5px;height:1px;background:#c6c6c6;"></div>
<span class="t c" style="left:10px;top:478.4px;font-size:11.3px;color:#333;transform:translate(-50%,-50%) scaleX(0.920);">21</span>
<div class="a" style="left:21.5px;top:500.88px;width:911px;height:1px;background:#e1e1e1;"></div>
<div class="a" style="left:0px;top:500.88px;width:21.5px;height:1px;background:#c6c6c6;"></div>
<span class="t c" style="left:10px;top:494.64px;font-size:11.3px;color:#217346;transform:translate(-50%,-50%) scaleX(0.920);">22</span>
<div class="a" style="left:21.5px;top:517.12px;width:911px;height:1px;background:#e1e1e1;"></div>
<div class="a" style="left:0px;top:517.12px;width:21.5px;height:1px;background:#c6c6c6;"></div>
<span class="t c" style="left:10px;top:510.88px;font-size:11.3px;color:#333;transform:translate(-50%,-50%) scaleX(0.920);">23</span>
<div class="a" style="left:21.5px;top:533.36px;width:911px;height:1px;background:#e1e1e1;"></div>
<div class="a" style="left:0px;top:533.36px;width:21.5px;height:1px;background:#c6c6c6;"></div>
<span class="t c" style="left:10px;top:527.12px;font-size:11.3px;color:#333;transform:translate(-50%,-50%) scaleX(0.920);">24</span>
<div class="a" style="left:21.5px;top:549.6px;width:911px;height:1px;background:#e1e1e1;"></div>
<div class="a" style="left:0px;top:549.6px;width:21.5px;height:1px;background:#c6c6c6;"></div>
<span class="t c" style="left:10px;top:543.36px;font-size:11.3px;color:#333;transform:translate(-50%,-50%) scaleX(0.920);">25</span>
<div class="a" style="left:21.5px;top:565.8399999999999px;width:911px;height:1px;background:#e1e1e1;"></div>
<div class="a" style="left:0px;top:565.8399999999999px;width:21.5px;height:1px;background:#c6c6c6;"></div>
<span class="t c" style="left:10px;top:559.5999999999999px;font-size:11.3px;color:#333;transform:translate(-50%,-50%) scaleX(0.920);">26</span>
<svg class="a" style="left:0px;top:326px;" width="7" height="16" viewBox="0 0 7 16"><circle cx="-0.800" cy="7.800" r="5.200" fill="none" stroke="#8f8f8f" stroke-width="1.600"/></svg>
<span class="t l" style="left:24.5px;top:152.79999999999998px;font-size:10.7px;color:#000;">a</span>
<span class="t l" style="left:79.5px;top:152.79999999999998px;font-size:10.7px;color:#000;">b</span>
<span class="t l" style="left:24.5px;top:169.04px;font-size:10.7px;color:#000;">a1</span>
<span class="t l" style="left:79.5px;top:169.04px;font-size:10.7px;color:#000;">b1</span>
<span class="t l" style="left:24.5px;top:185.27999999999997px;font-size:10.7px;color:#000;">a2</span>
<span class="t l" style="left:79.5px;top:185.27999999999997px;font-size:10.7px;color:#000;">b1</span>
<span class="t l" style="left:24.5px;top:201.51999999999998px;font-size:10.7px;color:#000;">a3</span>
<span class="t l" style="left:79.5px;top:201.51999999999998px;font-size:10.7px;color:#000;">b2</span>
<span class="t l" style="left:169.5px;top:152.79999999999998px;font-size:10.7px;color:#000;">c</span>
<div class="a" style="left:76px;top:224.7px;width:190px;height:17.34px;background:#d2eefa;"></div>
<span class="t l" style="left:79.5px;top:233.99999999999997px;font-size:10.7px;color:#000;">f</span>
<span class="t l" style="left:169.5px;top:233.99999999999997px;font-size:10.7px;color:#000;letter-spacing:0.38px;">(Multiple Items)</span>
<div class="a" style="left:76px;top:257.17999999999995px;width:191px;height:33.58px;background:#1eaae3;"></div>
<span class="t l" style="left:79.5px;top:282.71999999999997px;font-size:10.7px;color:#fff;font-weight:bold;">Row Labels</span>
<span class="t l" style="left:169.5px;top:282.71999999999997px;font-size:10.7px;color:#fff;font-weight:bold;">b</span>
<svg class="a" style="left:151.5px;top:275.02px;" width="14" height="14" viewBox="0 0 14 14"><defs><linearGradient id="fg" x1="0" y1="0" x2="0" y2="1"><stop offset="0" stop-color="#fff"/><stop offset="1" stop-color="#e1e1e1"/></linearGradient></defs><rect x="0.5" y="0.500" width="13" height="13" fill="url(#fg)" stroke="#a8a8a8"/><path d="M4 6H10L7 9.300Z" fill="#555"/></svg>
<div class="a" style="left:76px;top:289.65999999999997px;width:90.5px;height:33.58px;background:#d2eefa;"></div>
<div class="a" style="left:166.5px;top:289.65999999999997px;width:100px;height:33.58px;background:#fff;"></div>
<svg class="a" style="left:82px;top:295.56px;" width="7.5" height="7.5" viewBox="0 0 7.5 7.5"><rect x="0.5" y="0.500" width="6.500" height="6.500" fill="#f4f4f4" stroke="#a8a8a8"/><path d="M2 3.750H5.500" stroke="#666" stroke-width="1"/></svg>
<span class="t l" style="left:91.5px;top:298.96px;font-size:10.7px;color:#000;font-weight:bold;">a1</span>
<span class="t l" style="left:169.5px;top:298.96px;font-size:10.7px;color:#000;font-weight:bold;">b1</span>
<div class="a" style="left:76px;top:322.14px;width:191px;height:33.58px;background:#a5ddf5;"></div>
<span class="t l" style="left:79.5px;top:331.44px;font-size:10.7px;color:#000;font-weight:bold;">a1 Sum of d</span>
<span class="t l" style="left:79.5px;top:347.68px;font-size:10.7px;color:#000;font-weight:bold;">a1 Count of c</span>
<div class="a" style="left:76px;top:354.61999999999995px;width:90.5px;height:33.58px;background:#d2eefa;"></div>
<div class="a" style="left:166.5px;top:354.61999999999995px;width:100px;height:33.58px;background:#fff;"></div>
<svg class="a" style="left:82px;top:360.52px;" width="7.5" height="7.5" viewBox="0 0 7.5 7.5"><rect x="0.5" y="0.500" width="6.500" height="6.500" fill="#f4f4f4" stroke="#a8a8a8"/><path d="M2 3.750H5.500" stroke="#666" stroke-width="1"/></svg>
<span class="t l" style="left:91.5px;top:363.91999999999996px;font-size:10.7px;color:#000;font-weight:bold;">a3</span>
<span class="t l" style="left:169.5px;top:363.91999999999996px;font-size:10.7px;color:#000;font-weight:bold;">b2</span>
<div class="a" style="left:76px;top:387.0999999999999px;width:191px;height:33.58px;background:#a5ddf5;"></div>
<span class="t l" style="left:79.5px;top:396.3999999999999px;font-size:10.7px;color:#000;font-weight:bold;">a3 Sum of d</span>
<span class="t l" style="left:79.5px;top:412.63999999999993px;font-size:10.7px;color:#000;font-weight:bold;">a3 Count of c</span>
<div class="a" style="left:76px;top:420.17999999999995px;width:191px;height:31.479999999999997px;background:#fff;"></div>
<span class="t l" style="left:79.5px;top:428.87999999999994px;font-size:10.7px;color:#000;font-weight:bold;">Total Sum of d</span>
<span class="t l" style="left:79.5px;top:445.11999999999995px;font-size:10.7px;color:#000;font-weight:bold;">Total Count of c</span>
<div class="a" style="left:76px;top:419.5799999999999px;width:191px;height:1px;background:#45a6da;"></div>
<div class="a" style="left:76px;top:451.65999999999997px;width:191px;height:1px;background:#2a86bd;"></div>
<div class="a" style="left:560px;top:199.5px;width:365px;height:243px;background:#fff;border:1px solid #d9d9d9;"></div>
<div class="a" style="left:600px;top:258.0px;width:253px;height:1px;background:#dedede;"></div>
<div class="a" style="left:600px;top:269.85px;width:253px;height:1px;background:#dedede;"></div>
<div class="a" style="left:600px;top:281.7px;width:253px;height:1px;background:#dedede;"></div>
<div class="a" style="left:600px;top:293.55px;width:253px;height:1px;background:#dedede;"></div>
<div class="a" style="left:600px;top:305.4px;width:253px;height:1px;background:#dedede;"></div>
<div class="a" style="left:600px;top:317.25px;width:253px;height:1px;background:#dedede;"></div>
<div class="a" style="left:600px;top:329.1px;width:253px;height:1px;background:#dedede;"></div>
<div class="a" style="left:600px;top:340.95px;width:253px;height:1px;background:#dedede;"></div>
<svg class="a" style="left:630px;top:255px;" width="230" height="100" viewBox="0 0 230 100">
<path d="M18.500 95.200L27.500 87.700H45.500L36.500 95.200Z" fill="#1cade4"/><path d="M18.500 95.200H36.500" stroke="#1687b3" stroke-width="0.800"/>
<path d="M176.500 95.200L185.500 87.700H203.500L194.500 95.200Z" fill="#2375b0"/><path d="M176.500 95.200H194.500" stroke="#1a5a8a" stroke-width="0.800"/>
<rect x="108" y="17.300" width="20" height="78" fill="#2683c6"/>
<path d="M108 17.300L114.500 12.500H134L128 17.300Z" fill="#1f6aa3"/>
<path d="M128 17.300L134 12.500V90.500L128 95.300Z" fill="#1a5480"/>
</svg>
<span class="t c" style="left:663px;top:367.3px;font-size:9.4px;color:#505050;">Count of c</span>
<span class="t c" style="left:732px;top:367.3px;font-size:9.4px;color:#505050;">Sum of d</span>
<span class="t c" style="left:801.5px;top:367.3px;font-size:9.4px;color:#505050;">Count of c</span>
<span class="t l" style="left:623.5px;top:387px;font-size:9.4px;color:#505050;">b1</span>
<span class="t l" style="left:762px;top:387px;font-size:9.4px;color:#505050;">b2</span>
<span class="t l" style="left:623.5px;top:406.3px;font-size:9.4px;color:#505050;">a1</span>
<span class="t l" style="left:762px;top:406.3px;font-size:9.4px;color:#505050;">a3</span>
<div class="a" style="left:888px;top:306.3px;width:27.5px;height:14.5px;background:#dcdcdc;"></div>
<span class="t l" style="left:893px;top:313.5px;font-size:9.4px;color:#333;">e</span>
<svg class="a" style="left:905.25px;top:312.3px;" width="5.5" height="3" viewBox="0 0 5.5 3"><path d="M0 0H5.5L2.75 3Z" fill="#333"/></svg>
<div class="a" style="left:893px;top:328px;width:5.6px;height:5.6px;background:#1cade4;"></div>
<span class="t l" style="left:900.8px;top:331px;font-size:9.4px;color:#505050;">e1</span>
<div class="a" style="left:893px;top:347px;width:5.6px;height:5.6px;background:#2683c6;"></div>
<span class="t l" style="left:900.8px;top:349.8px;font-size:9.4px;color:#505050;">e3</span>
<div class="a" style="left:888px;top:422px;width:12.8px;height:13.5px;background:#d0d0d0;"></div>
<div class="a" style="left:901.7px;top:422px;width:12.8px;height:13.5px;background:#d0d0d0;"></div>
<svg class="a" style="left:890px;top:424.3px;" width="9" height="9" viewBox="0 0 9 9"><path d="M0.500 4.500H8.500M4.500 0.500V8.500" stroke="#6e6e6e" stroke-width="1.900"/></svg>
<svg class="a" style="left:903.7px;top:424.3px;" width="9" height="9" viewBox="0 0 9 9"><path d="M0.500 4.500H8.500" stroke="#6e6e6e" stroke-width="1.900"/></svg>
<svg class="a" style="left:580px;top:480px;" width="104" height="28" viewBox="0 0 104 28"><path d="M8 4.950H97.700V19.500M8 21.900H94.500" fill="none" stroke="#2f8154" stroke-width="1.700"/><rect x="94.900" y="19.600" width="4.600" height="4.600" fill="#fff"/><rect x="95.700" y="20.300" width="3.300" height="3.200" fill="#27794b"/></svg>
<div class="a" style="left:240.7px;top:140px;width:380.09999999999997px;height:382.70000000000005px;background:#f0f0f0;border:1px solid #808080;border-radius:1.500px;box-shadow:0 2px 10px 1px rgba(0,0,0,0.32);"></div>
<div class="a" style="left:241.7px;top:141px;width:378.09999999999997px;height:25.2px;background:#fff;"></div>
<span class="t l" style="left:248.3px;top:154.3px;font-size:11px;color:#111;">Create New Theme Colors</span>
<span class="t c" style="left:560px;top:153.8px;font-size:10.5px;color:#222;">?</span>
<svg class="a" style="left:594.5px;top:148.5px;" width="10" height="10" viewBox="0 0 10 10"><path d="M0.700 0.700L9.300 9.300M9.300 0.700L0.700 9.300" stroke="#222" stroke-width="1" fill="none"/></svg>
<div class="a" style="left:247.5px;top:172.3px;width:368px;height:320.2px;background:#fcfcfc;"></div>
<div class="a" style="left:253.5px;top:184px;width:173.5px;height:282px;border:1px solid #dcdcdc;"></div>
<div class="a" style="left:257.5px;top:180px;width:57px;height:10px;background:#fcfcfc;"></div>
<span class="t l" style="left:259px;top:184.8px;font-size:9px;color:#222;">Theme colors</span>
<div class="a" style="left:434.5px;top:184px;width:174.8px;height:164px;border:1px solid #dcdcdc;"></div>
<div class="a" style="left:438.5px;top:180px;width:33px;height:10px;background:#fcfcfc;"></div>
<span class="t l" style="left:440.8px;top:184.8px;font-size:9px;color:#222;">Sample</span>
<span class="t l" style="left:265.2px;top:208.70000000000002px;font-size:9px;color:#1c1c1c;"><u>T</u>ext/Background - Dark 1</span>
<svg class="a" style="left:376px;top:198.4px;" width="41" height="20" viewBox="0 0 41 20"><rect x="1.500" y="1.600" width="37.300" height="16.900" fill="#e1e1e1" stroke="#b4b4b4"/><rect x="4.500" y="4.300" width="17.400" height="11.500" fill="#000000" stroke="#86aad6"/><rect x="5.500" y="5.300" width="15.400" height="9.500" fill="none" stroke="#fff" stroke-opacity="0.700"/><path d="M27.500 8.200H33.700L30.600 11.500Z" fill="#111"/></svg>
<span class="t l" style="left:265.2px;top:230.34000000000003px;font-size:9px;color:#1c1c1c;">Text/<u>B</u>ackground - Light 1</span>
<svg class="a" style="left:376px;top:220.04000000000002px;" width="41" height="20" viewBox="0 0 41 20"><rect x="1.500" y="1.600" width="37.300" height="16.900" fill="#e1e1e1" stroke="#b4b4b4"/><rect x="4.500" y="4.300" width="17.400" height="11.500" fill="#ffffff" stroke="#86aad6"/><rect x="5.500" y="5.300" width="15.400" height="9.500" fill="none" stroke="#fff" stroke-opacity="0.700"/><path d="M27.500 8.200H33.700L30.600 11.500Z" fill="#111"/></svg>
<span class="t l" style="left:265.2px;top:251.98000000000002px;font-size:9px;color:#1c1c1c;">Text/Background - <u>D</u>ark 2</span>
<svg class="a" style="left:376px;top:241.68px;" width="41" height="20" viewBox="0 0 41 20"><rect x="1.500" y="1.600" width="37.300" height="16.900" fill="#e1e1e1" stroke="#b4b4b4"/><rect x="4.500" y="4.300" width="17.400" height="11.500" fill="#335b74" stroke="#86aad6"/><rect x="5.500" y="5.300" width="15.400" height="9.500" fill="none" stroke="#fff" stroke-opacity="0.700"/><path d="M27.500 8.200H33.700L30.600 11.500Z" fill="#111"/></svg>
<span class="t l" style="left:265.2px;top:273.62px;font-size:9px;color:#1c1c1c;">Text/Background - <u>L</u>ight 2</span>
<svg class="a" style="left:376px;top:263.32px;" width="41" height="20" viewBox="0 0 41 20"><rect x="1.500" y="1.600" width="37.300" height="16.900" fill="#e1e1e1" stroke="#b4b4b4"/><rect x="4.500" y="4.300" width="17.400" height="11.500" fill="#dfe3e5" stroke="#86aad6"/><rect x="5.500" y="5.300" width="15.400" height="9.500" fill="none" stroke="#fff" stroke-opacity="0.700"/><path d="M27.500 8.200H33.700L30.600 11.500Z" fill="#111"/></svg>
<span class="t l" style="left:265.2px;top:295.26000000000005px;font-size:9px;color:#1c1c1c;">Accent <u>1</u></span>
<svg class="a" style="left:376px;top:284.96000000000004px;" width="41" height="20" viewBox="0 0 41 20"><rect x="1.500" y="1.600" width="37.300" height="16.900" fill="#e1e1e1" stroke="#b4b4b4"/><rect x="4.500" y="4.300" width="17.400" height="11.500" fill="#1cade4" stroke="#86aad6"/><rect x="5.500" y="5.300" width="15.400" height="9.500" fill="none" stroke="#fff" stroke-opacity="0.700"/><path d="M27.500 8.200H33.700L30.600 11.500Z" fill="#111"/></svg>
<span class="t l" style="left:265.2px;top:316.90000000000003px;font-size:9px;color:#1c1c1c;">Accent <u>2</u></span>
<svg class="a" style="left:376px;top:306.6px;" width="41" height="20" viewBox="0 0 41 20"><rect x="1.500" y="1.600" width="37.300" height="16.900" fill="#e1e1e1" stroke="#b4b4b4"/><rect x="4.500" y="4.300" width="17.400" height="11.500" fill="#2683c6" stroke="#86aad6"/><rect x="5.500" y="5.300" width="15.400" height="9.500" fill="none" stroke="#fff" stroke-opacity="0.700"/><path d="M27.500 8.200H33.700L30.600 11.500Z" fill="#111"/></svg>
<span class="t l" style="left:265.2px;top:338.54px;font-size:9px;color:#1c1c1c;">Accent <u>3</u></span>
<svg class="a" style="left:376px;top:328.24px;" width="41" height="20" viewBox="0 0 41 20"><rect x="1.500" y="1.600" width="37.300" height="16.900" fill="#e1e1e1" stroke="#b4b4b4"/><rect x="4.500" y="4.300" width="17.400" height="11.500" fill="#27ced7" stroke="#86aad6"/><rect x="5.500" y="5.300" width="15.400" height="9.500" fill="none" stroke="#fff" stroke-opacity="0.700"/><path d="M27.500 8.200H33.700L30.600 11.500Z" fill="#111"/></svg>
<span class="t l" style="left:265.2px;top:360.18px;font-size:9px;color:#1c1c1c;">Accent <u>4</u></span>
<svg class="a" style="left:376px;top:349.88px;" width="41" height="20" viewBox="0 0 41 20"><rect x="1.500" y="1.600" width="37.300" height="16.900" fill="#e1e1e1" stroke="#b4b4b4"/><rect x="4.500" y="4.300" width="17.400" height="11.500" fill="#42ba97" stroke="#86aad6"/><rect x="5.500" y="5.300" width="15.400" height="9.500" fill="none" stroke="#fff" stroke-opacity="0.700"/><path d="M27.500 8.200H33.700L30.600 11.500Z" fill="#111"/></svg>
<span class="t l" style="left:265.2px;top:381.82px;font-size:9px;color:#1c1c1c;">Accent <u>5</u></span>
<svg class="a" style="left:376px;top:371.52px;" width="41" height="20" viewBox="0 0 41 20"><rect x="1.500" y="1.600" width="37.300" height="16.900" fill="#e1e1e1" stroke="#b4b4b4"/><rect x="4.500" y="4.300" width="17.400" height="11.500" fill="#3e8853" stroke="#86aad6"/><rect x="5.500" y="5.300" width="15.400" height="9.500" fill="none" stroke="#fff" stroke-opacity="0.700"/><path d="M27.500 8.200H33.700L30.600 11.500Z" fill="#111"/></svg>
<span class="t l" style="left:265.2px;top:403.46px;font-size:9px;color:#1c1c1c;">Accent <u>6</u></span>
<svg class="a" style="left:376px;top:393.15999999999997px;" width="41" height="20" viewBox="0 0 41 20"><rect x="1.500" y="1.600" width="37.300" height="16.900" fill="#e1e1e1" stroke="#b4b4b4"/><rect x="4.500" y="4.300" width="17.400" height="11.500" fill="#62a39f" stroke="#86aad6"/><rect x="5.500" y="5.300" width="15.400" height="9.500" fill="none" stroke="#fff" stroke-opacity="0.700"/><path d="M27.500 8.200H33.700L30.600 11.500Z" fill="#111"/></svg>
<span class="t l" style="left:265.2px;top:425.1px;font-size:9px;color:#1c1c1c;"><u>H</u>yperlink</span>
<svg class="a" style="left:376px;top:414.8px;" width="41" height="20" viewBox="0 0 41 20"><rect x="1.500" y="1.600" width="37.300" height="16.900" fill="#e1e1e1" stroke="#b4b4b4"/><rect x="4.500" y="4.300" width="17.400" height="11.500" fill="#6eac1c" stroke="#86aad6"/><rect x="5.500" y="5.300" width="15.400" height="9.500" fill="none" stroke="#fff" stroke-opacity="0.700"/><path d="M27.500 8.200H33.700L30.600 11.500Z" fill="#111"/></svg>
<span class="t l" style="left:265.2px;top:446.74000000000007px;font-size:9px;color:#1c1c1c;"><u>F</u>ollowed Hyperlink</span>
<svg class="a" style="left:376px;top:436.44000000000005px;" width="41" height="20" viewBox="0 0 41 20"><rect x="1.500" y="1.600" width="37.300" height="16.900" fill="#e1e1e1" stroke="#b4b4b4"/><rect x="4.500" y="4.300" width="17.400" height="11.500" fill="#b26b02" stroke="#86aad6"/><rect x="5.500" y="5.300" width="15.400" height="9.500" fill="none" stroke="#fff" stroke-opacity="0.700"/><path d="M27.500 8.200H33.700L30.600 11.500Z" fill="#111"/></svg>
<div class="a" style="left:447.5px;top:200px;width:75px;height:138px;background:#335b74;"></div>
<div class="a" style="left:522.5px;top:200px;width:74.7px;height:138px;background:#dfe3e5;"></div>
<span class="t c" style="left:484.3px;top:217px;font-size:11.6px;color:#fff;font-weight:bold;">Text</span>
<span class="t c" style="left:559.8px;top:217px;font-size:11.6px;color:#111;font-weight:bold;">Text</span>
<svg class="a" style="left:447.5px;top:200px;" width="75" height="138" viewBox="0 0 75 138"><defs><linearGradient id="sg1" x1="0" y1="0" x2="1" y2="0"><stop offset="0" stop-color="#fff"/><stop offset="0.35" stop-color="#d4ecf9"/><stop offset="1" stop-color="#1cade4"/></linearGradient></defs><rect x="30.400" y="29.400" width="23.600" height="18.200" fill="url(#sg1)" stroke="#9fd8f3" stroke-width="0.700"/><circle cx="27" cy="46.800" r="9.300" fill="#fff" stroke="#e8f6fd" stroke-width="1.200"/><path d="M23.200 47.200q0.800 -1.600 1.600 0t1.600 0t1.600 0t1.600 0" fill="none" stroke="#59bfe9" stroke-width="0.800"/><rect x="10.70" y="82.80" width="8.20" height="9.50" fill="#1cade4" stroke="#fff" stroke-width="0.900"/><rect x="18.90" y="75.00" width="8.60" height="17.30" fill="#2683c6" stroke="#fff" stroke-width="0.900"/><rect x="27.50" y="66.40" width="9.70" height="25.90" fill="#27ced7" stroke="#fff" stroke-width="0.900"/><rect x="37.20" y="72.40" width="8.20" height="19.90" fill="#42ba97" stroke="#fff" stroke-width="0.900"/><rect x="45.40" y="77.70" width="8.80" height="14.60" fill="#3e8853" stroke="#fff" stroke-width="0.900"/><rect x="54.20" y="85.20" width="8.50" height="7.10" fill="#62a39f" stroke="#fff" stroke-width="0.900"/><path d="M6 92.300H69" stroke="#fff" stroke-width="1"/></svg>
<svg class="a" style="left:522.5px;top:200px;" width="75" height="138" viewBox="0 0 75 138"><defs><linearGradient id="sg2" x1="0" y1="0" x2="1" y2="0"><stop offset="0" stop-color="#fff"/><stop offset="0.35" stop-color="#d4ecf9"/><stop offset="1" stop-color="#1cade4"/></linearGradient></defs><rect x="30.400" y="29.400" width="23.600" height="18.200" fill="url(#sg2)" stroke="#1cade4" stroke-width="0.700"/><circle cx="27" cy="46.800" r="9.300" fill="#fff" stroke="#1cade4" stroke-width="1.200"/><path d="M23.200 47.200q0.800 -1.600 1.600 0t1.600 0t1.600 0t1.600 0" fill="none" stroke="#59bfe9" stroke-width="0.800"/><rect x="10.70" y="82.80" width="8.20" height="9.50" fill="#1cade4" stroke="#2a3a44" stroke-width="0.900"/><rect x="18.90" y="75.00" width="9.20" height="17.30" fill="#2683c6" stroke="#2a3a44" stroke-width="0.900"/><rect x="28.10" y="66.40" width="8.60" height="25.90" fill="#27ced7" stroke="#2a3a44" stroke-width="0.900"/><rect x="36.70" y="72.40" width="8.70" height="19.90" fill="#42ba97" stroke="#2a3a44" stroke-width="0.900"/><rect x="45.40" y="77.70" width="8.70" height="14.60" fill="#3e8853" stroke="#2a3a44" stroke-width="0.900"/><rect x="54.10" y="85.20" width="8.60" height="7.10" fill="#62a39f" stroke="#2a3a44" stroke-width="0.900"/><path d="M6 92.300H69" stroke="#2a3a44" stroke-width="1"/></svg>
<span class="t c" style="left:484.5px;top:311.9px;font-size:9px;color:#6eac1c;"><u class="h">Hyperlink</u></span>
<span class="t c" style="left:484.5px;top:325.3px;font-size:9px;color:#b26b02;"><u class="h">Hyperlink</u></span>
<span class="t c" style="left:559.3px;top:311.9px;font-size:9px;color:#6eac1c;"><u class="h">Hyperlink</u></span>
<span class="t c" style="left:559.3px;top:325.3px;font-size:9px;color:#b26b02;"><u class="h">Hyperlink</u></span>
<span class="t l" style="left:258.5px;top:480.6px;font-size:9px;color:#222;"><u>N</u>ame:</span>
<div class="a" style="left:293px;top:471.5px;width:318.7px;height:17.3px;background:#fff;border:1px solid #c2c2c2;"></div>
<div class="a" style="left:294.6px;top:474px;width:38.5px;height:11.3px;background:#a6cef0;"></div>
<span class="t l" style="left:295.3px;top:480.4px;font-size:9px;color:#222;">Custom 1</span>
<div class="a" style="left:247.7px;top:496px;width:59.2px;height:19px;background:#cccccc;border:1px solid #bfbfbf;"></div>
<span class="t c" style="left:277.3px;top:505.8px;font-size:8.8px;color:#838383;"><u>R</u>eset</span>
<svg class="a" style="left:486px;top:494px;" width="63" height="23" viewBox="0 0 63 23"><rect x="2.200" y="2.400" width="58" height="18.300" fill="#e1e1e1" stroke="#0a7ad8" stroke-width="1.500"/></svg>
<span class="t c" style="left:517px;top:505.8px;font-size:9px;color:#111;"><u>S</u>ave</span>
<div class="a" style="left:555.3px;top:496px;width:59.4px;height:19px;background:#e1e1e1;border:1px solid #b4b4b4;"></div>
<span class="t c" style="left:585px;top:505.8px;font-size:9px;color:#111;">Cancel</span>
<svg class="a" style="left:406.8px;top:196.2px;filter:drop-shadow(0 1px 1px rgba(0,0,0,0.25));" width="23.2" height="35.6" viewBox="-1 -1 23.2 35.6"><path d="M0.600 8.600Q0.300 7.800 1 7.400L9.200 0.900Q9.600 0.600 10.200 0.600H14Q15 0.600 15 1.600V28H19.800Q20.600 28 20.600 28.900V32Q20.600 33 19.800 33H1.500Q0.600 33 0.600 32V28.900Q0.600 28 1.500 28H7.600V9.800L2.800 12.600Q2 13 1.600 12.200Z" fill="#a6cdec" stroke="#1b7fcc" stroke-width="1.500" stroke-linejoin="round"/></svg>
<svg class="a" style="left:336.2px;top:461.7px;filter:drop-shadow(0 1px 1px rgba(0,0,0,0.25));" width="25.3" height="36.5" viewBox="-1 -1 25.3 36.5"><path d="M1.200 7.700C3.500 3 7 0.600 11 0.600C17.500 0.600 21.600 4.500 21.600 9.800C21.600 15 17 20 8.800 27.600H21.900Q22.800 27.600 22.800 28.600V33Q22.800 34 21.900 34H1.400Q0.500 34 0.500 33V28.800C7 22 13.800 15.500 13.800 10.800C13.800 8 12.300 6.800 10.300 6.800C8 6.800 6 8 4.200 10C3.600 10.600 2.800 10.500 2.300 9.800Z" fill="#a6cdec" stroke="#1b7fcc" stroke-width="1.500" stroke-linejoin="round"/></svg>
<svg class="a" style="left:529px;top:512.6px;filter:drop-shadow(0 1px 1px rgba(0,0,0,0.25));" width="25.5" height="36.2" viewBox="-1 -1 25.5 36.2"><path d="M1.400 5C4 2 7.500 0.500 11.500 0.500C17.500 0.500 21.200 3.500 21.200 8C21.200 11.500 19.500 14 16.500 15.500C20.500 16.500 23 19.500 23 23.800C23 30 18 33.600 11 33.600C6.500 33.600 3 32.500 0.800 31Q0.400 30.700 0.400 30V26.500Q0.500 25.500 1.500 26C4 27.800 7 28.800 10 28.800C13.500 28.800 15.800 27 15.800 24C15.800 20.800 13.500 19 9.500 19H5Q4 19 4 18V15Q4 14 5 14H9C12.500 14 14.500 12.300 14.500 9.600C14.500 7 13 5.500 10.300 5.500C7.800 5.500 5.500 6.500 3.300 8.300Q2.300 9 1.800 8Z" fill="#a6cdec" stroke="#1b7fcc" stroke-width="1.500" stroke-linejoin="round"/></svg>
</body></html>
